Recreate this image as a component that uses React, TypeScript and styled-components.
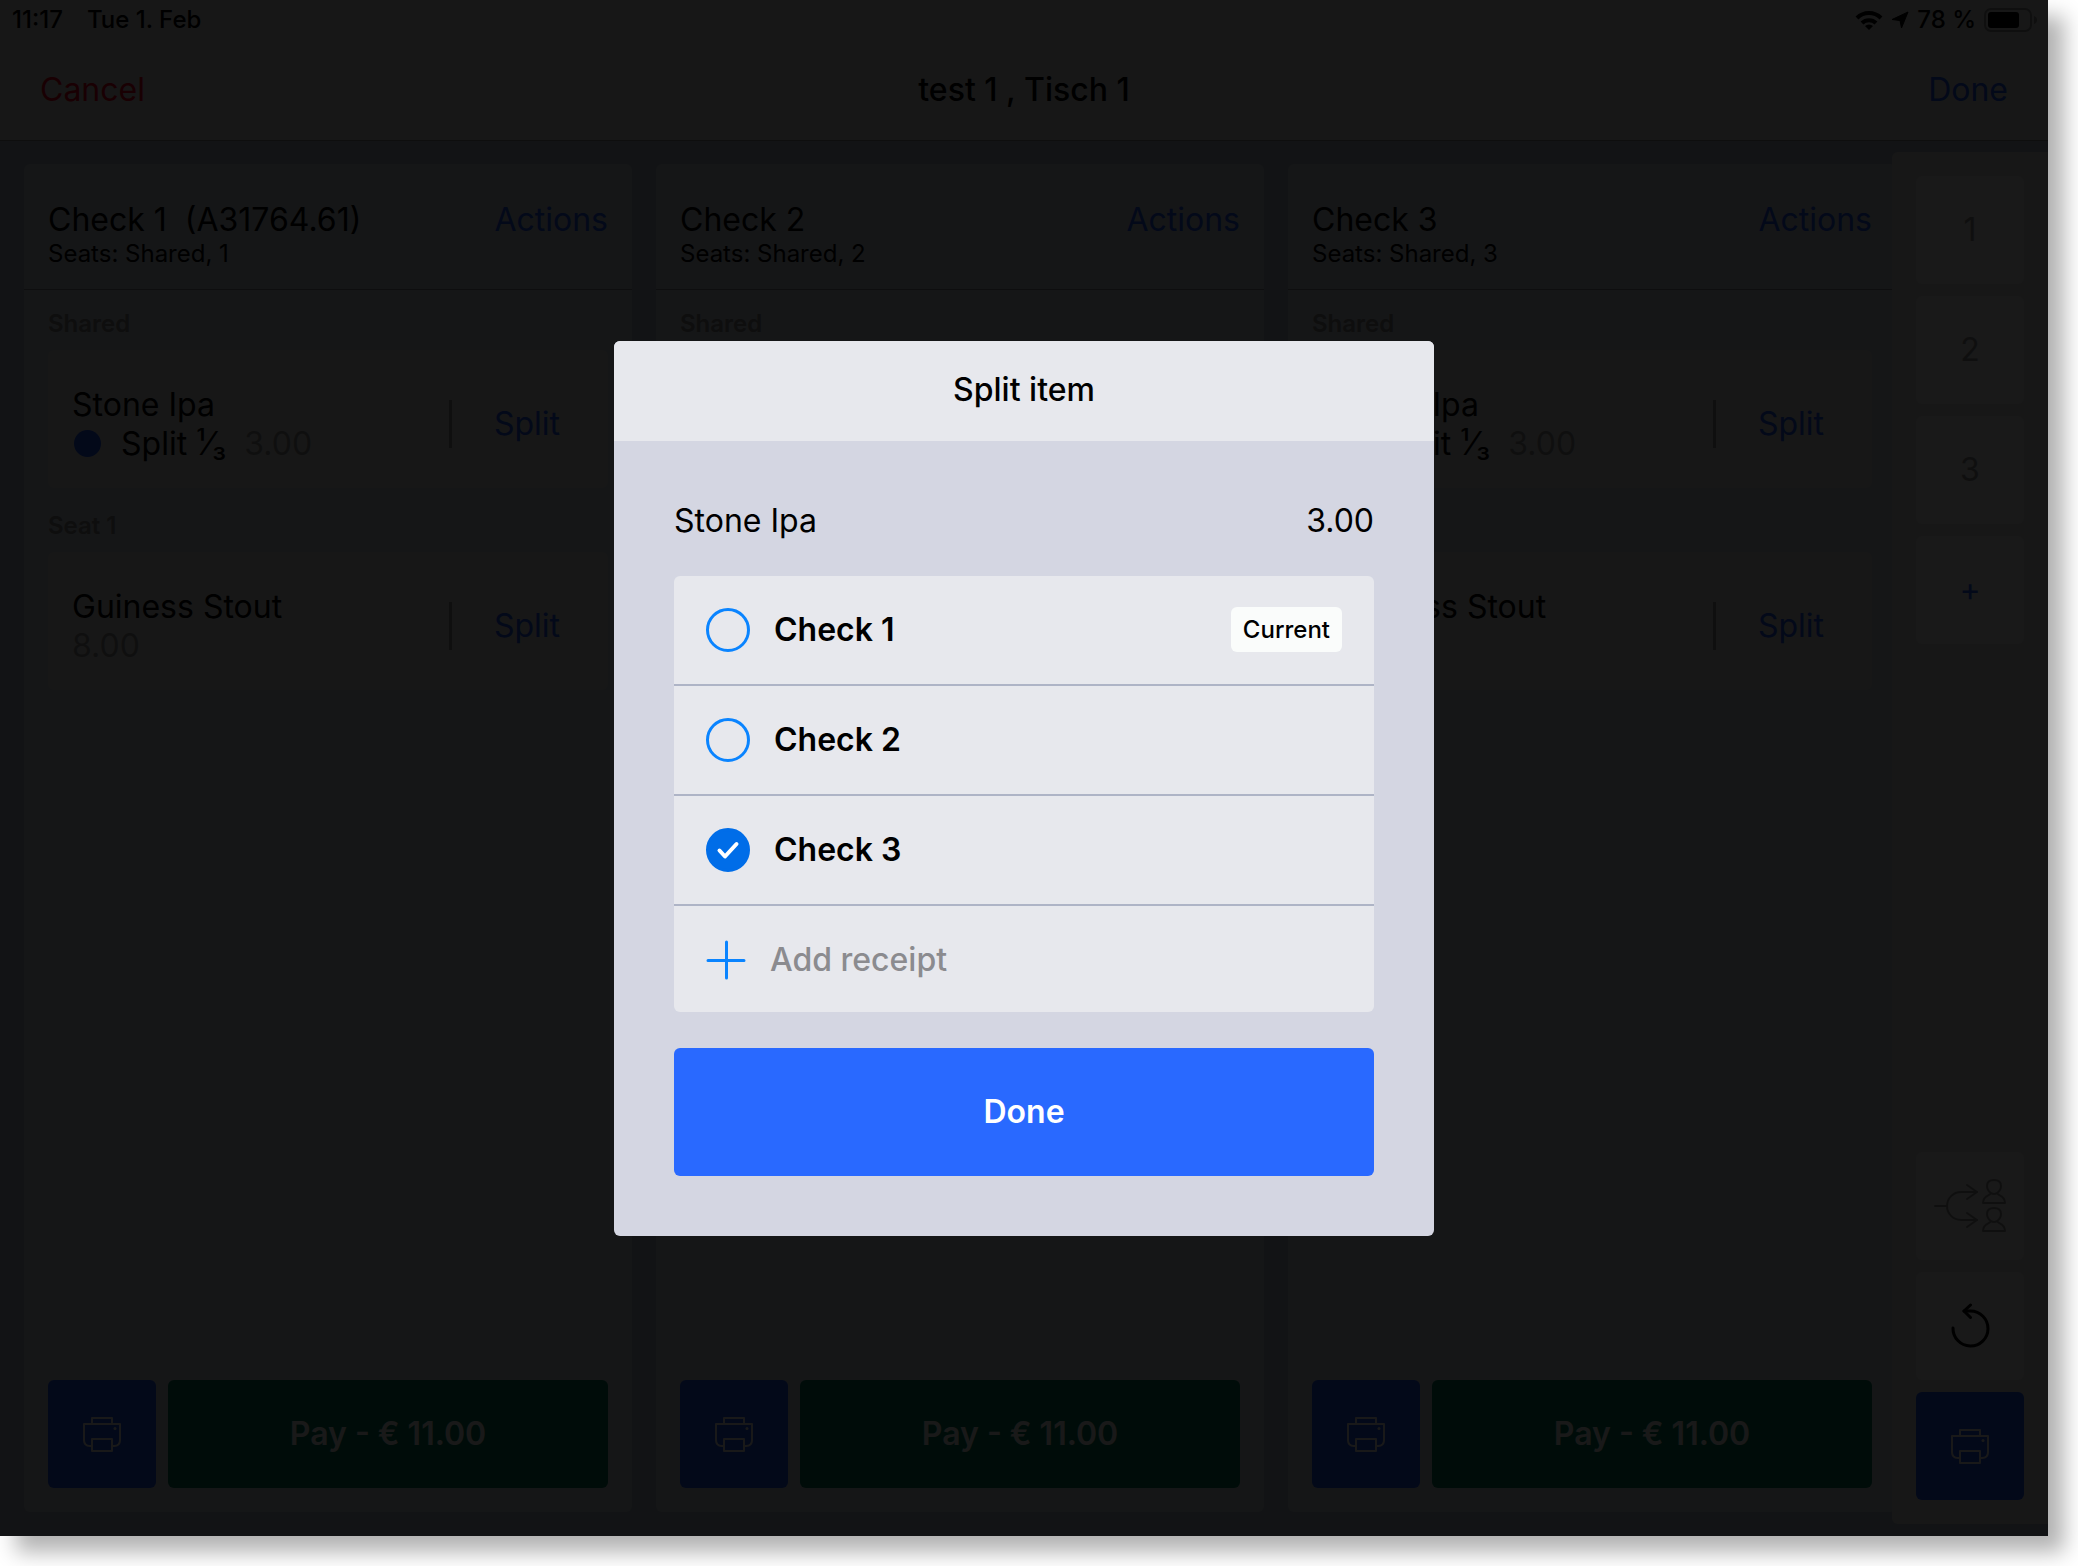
import React, { useState } from 'react';
import styled, { createGlobalStyle } from 'styled-components';

const blue = '#1e5aff';

const GlobalStyle = createGlobalStyle`
  * { box-sizing: border-box; }
  html, body, #root { height: 100%; }
  body {
    margin: 0;
    background: #fff;
    color: #000;
    font-family: Inter, "Liberation Sans", sans-serif;
    font-size: 32px;
    line-height: 40px;
    font-weight: 400;
    overflow: hidden;
  }
  button {
    font: inherit;
    color: inherit;
    border: 0;
    padding: 0;
    background: none;
    cursor: pointer;
  }
  h1, h2, h3, p, ul { margin: 0; padding: 0; font: inherit; list-style: none; }
`;

const Page = styled.div`
  height: 100%;
  padding: 0 30px 30px 0;
`;

const Screen = styled.div`
  position: relative;
  height: 100%;
  display: flex;
  flex-direction: column;
  background: #b8c4d2;
  box-shadow: 16px 16px 20px rgba(0, 0, 0, 0.3);
`;

const StatusBar = styled.div`
  display: flex;
  justify-content: space-between;
  align-items: center;
  height: 40px;
  padding: 0 10px 0 12px;
  background: #e8e8e8;
  font-size: 24px;
  line-height: 40px;
  font-weight: 500;
`;

const StatusGroup = styled.div<{ $gap: number }>`
  display: flex;
  align-items: center;
  gap: ${(p) => p.$gap}px;
`;

const NavBar = styled.header`
  display: grid;
  grid-template-columns: 1fr auto 1fr;
  align-items: center;
  height: 101px;
  padding: 0 40px;
  background: #e8e8e8;
  border-bottom: 1px solid #8c8c8c;
`;

const NavTitle = styled.h1`
  font-weight: 500;
`;

const LinkButton = styled.button<{ $tone?: string; $end?: boolean }>`
  color: ${(p) => p.$tone ?? blue};
  justify-self: ${(p) => (p.$end ? 'end' : 'start')};
`;

const Workspace = styled.main`
  flex: 1;
  min-height: 0;
  display: flex;
`;

const Columns = styled.div`
  flex: 1;
  min-width: 0;
  display: flex;
  gap: 24px;
  padding: 23px 0 24px 24px;
  margin-right: -4px;
`;

const Column = styled.section`
  flex: 1;
  min-width: 0;
  display: flex;
  flex-direction: column;
  background: #d5dce6;
  border-radius: 6px;
`;

const ColumnHead = styled.div`
  display: flex;
  justify-content: space-between;
  align-items: flex-start;
  height: 126px;
  padding: 36px 24px 0;
  border-bottom: 1px solid #8c9298;
`;

const ColumnTitle = styled.h2`
  white-space: pre;
`;

const Seats = styled.p`
  font-size: 24px;
  line-height: 28px;
`;

const ColumnBody = styled.div`
  flex: 1;
  display: flex;
  flex-direction: column;
  gap: 4px;
  padding: 0 24px;
`;

const GroupLabel = styled.h3`
  height: 60px;
  padding-top: 4px;
  font-size: 24px;
  line-height: 60px;
  font-weight: 600;
  color: #8c8c8c;
`;

const ItemCard = styled.div`
  display: flex;
  align-items: center;
  justify-content: space-between;
  height: 138px;
  padding: 10px 48px 0 24px;
  background: #e8e8e8;
  border-radius: 6px;
`;

const ItemLine = styled.div`
  display: flex;
  align-items: center;
  line-height: 39px;
`;

const Dot = styled.span`
  width: 27px;
  height: 27px;
  margin: 0 20px 0 2px;
  border-radius: 50%;
  background: ${blue};
`;

const SplitText = styled.span`
  white-space: pre;
`;

const Price = styled.span<{ $spaced?: boolean }>`
  margin-left: ${(p) => (p.$spaced ? 18 : 0)}px;
  color: #9c9c9c;
`;

const SplitArea = styled.div`
  display: flex;
  align-items: center;
  gap: 42px;
  &::before {
    content: '';
    width: 3px;
    height: 48px;
    background: #9c9c9c;
  }
`;

const ColumnFoot = styled.div`
  display: flex;
  gap: 12px;
  padding: 24px;
`;

const Tile = styled.button<{ $bg?: string; $tone?: string }>`
  flex: none;
  width: 108px;
  height: 108px;
  display: flex;
  align-items: center;
  justify-content: center;
  border-radius: 6px;
  background: ${(p) => p.$bg ?? '#f9f9f9'};
  color: ${(p) => p.$tone ?? '#9c9c9c'};
`;

const PayButton = styled.button`
  flex: 1;
  height: 108px;
  border-radius: 6px;
  background: #007d5a;
  color: #ffffff;
  font-weight: 600;
`;

const Sidebar = styled.aside`
  position: relative;
  display: flex;
  flex-direction: column;
  gap: 12px;
  margin: 11px 0 12px;
  padding: 24px;
  background: #e8e8e8;
  border-radius: 6px 0 0 6px;
`;

const Spacer = styled.div`
  flex: 1;
`;

const Overlay = styled.div`
  position: absolute;
  inset: 0;
  display: flex;
  align-items: center;
  justify-content: center;
  padding-top: 40px;
  background: rgba(0, 0, 0, 0.9);
`;

const Modal = styled.div`
  width: 820px;
  border-radius: 6px;
  overflow: hidden;
  background: #d4d6e2;
`;

const ModalHead = styled.h2`
  height: 100px;
  line-height: 98px;
  text-align: center;
  font-weight: 500;
  background: #e7e8ed;
`;

const ModalBody = styled.div`
  padding: 60px;
`;

const Summary = styled.div`
  display: flex;
  justify-content: space-between;
  margin-bottom: 35px;
`;

const CheckList = styled.ul`
  margin-bottom: 36px;
  border-radius: 6px;
  overflow: hidden;
  background: #e7e8ed;
`;

const CheckRow = styled.li`
  border-bottom: 2px solid #aeb4c6;
  &:last-child { border-bottom: 0; }
`;

const CheckLabel = styled.label`
  display: flex;
  align-items: center;
  height: 108px;
  padding: 0 32px;
  font-weight: 600;
  cursor: pointer;
`;

const CheckBox = styled.input`
  appearance: none;
  width: 44px;
  height: 44px;
  margin: 0 24px 0 0;
  border: 3px solid #0a84ff;
  border-radius: 50%;
  &:checked {
    border-color: #006de8;
    background: #006de8 url("data:image/svg+xml,%3Csvg xmlns='http://www.w3.org/2000/svg' viewBox='0 0 38 38'%3E%3Cpath d='M10.500 19.500l5.500 6L27.500 13' fill='none' stroke='white' stroke-width='4' stroke-linecap='round' stroke-linejoin='round'/%3E%3C/svg%3E") center / 38px 38px no-repeat;
  }
`;

const Badge = styled.span`
  margin-left: auto;
  padding: 1px 12px 0;
  border-radius: 6px;
  background: #fafcfb;
  font-size: 24px;
  line-height: 44px;
  font-weight: 500;
`;

const AddButton = styled.button`
  display: flex;
  align-items: center;
  gap: 24px;
  width: 100%;
  height: 106px;
  padding: 2px 32px 0;
  font-weight: 500;
  color: #8b8b8f;
`;

const PrimaryButton = styled.button`
  display: block;
  width: 100%;
  height: 128px;
  border-radius: 6px;
  background: #2969ff;
  color: #fff;
  font-weight: 600;
`;

const PrinterIcon = () => (
  <svg width="40" height="36" viewBox="0 0 40 36" fill="none" stroke="#fff" strokeWidth="2" strokeLinejoin="round" aria-hidden="true">
    <path d="M10 8V2h20v6" />
    <path d="M10 30H8q-6 0-6-6V8h36v16q0 6-6 6h-2" />
    <path d="M10 23h20v12H10z" />
    <circle cx="33" cy="12.500" r="1.500" fill="#fff" stroke="none" />
  </svg>
);

const SplitSeatsIcon = () => (
  <svg width="74" height="54" viewBox="0 0 74 54" fill="none" stroke="currentColor" strokeWidth="2" strokeLinecap="round" strokeLinejoin="round" aria-hidden="true">
    <path d="M2 27h12M44 13H28a14 14 0 0 0 0 28h16" />
    <path d="M34 6l10 7-10 7M34 34l10 7-10 7" />
    <path d="M58 14c-3-2-4-4-4-7 0-4 3-6 7-6s7 2 7 6c0 3-1 5-4 7q-3 2-6 0zM58 14c-1 3-8 2-8 10h22c0-8-7-7-8-10" />
    <path d="M58 42c-3-2-4-4-4-7 0-4 3-6 7-6s7 2 7 6c0 3-1 5-4 7q-3 2-6 0zM58 42c-1 3-8 2-8 10h22c0-8-7-7-8-10" />
  </svg>
);

const UndoIcon = () => (
  <svg width="40" height="46" viewBox="0 1 40 46" fill="none" stroke="#000" strokeWidth="3" strokeLinecap="round" strokeLinejoin="round" aria-hidden="true">
    <path d="M3 26A17.500 17.500 0 1 0 20.500 9H14" />
    <path d="M20.500 3L14 9l6.500 6.500" />
  </svg>
);

const PlusIcon = () => (
  <svg width="40" height="40" viewBox="0 0 40 40" stroke="#0a84ff" strokeWidth="3" strokeLinecap="round" aria-hidden="true">
    <path d="M20.500 2v36M2 20.500h36" />
  </svg>
);

const WifiIcon = () => (
  <svg width="28" height="20" viewBox="0 0 28 20" fill="none" stroke="#000" strokeWidth="4" aria-hidden="true">
    <path d="M2 8a17 17 0 0 1 24 0M7 13a10 10 0 0 1 14 0" />
    <path d="M14 20l-4-4a6 6 0 0 1 8 0z" fill="#000" stroke="none" />
  </svg>
);

const LocationIcon = () => (
  <svg width="18" height="18" viewBox="0 0 18 18" aria-hidden="true">
    <path d="M17 1L10.500 17 9 9.500 1 8.500z" fill="#000" stroke="#000" strokeLinejoin="round" />
  </svg>
);

const BatteryIcon = () => (
  <svg width="54" height="24" viewBox="0 0 54 24" aria-hidden="true">
    <rect x="1" y="1" width="46" height="22" rx="6" fill="none" stroke="#969696" strokeWidth="2" />
    <rect x="4" y="4" width="31" height="16" rx="3" fill="#000" />
    <path d="M50 8q3 1 3 4t-3 4z" fill="#969696" />
  </svg>
);

interface CheckColumnProps {
  seat: number;
  reference?: string;
}

function CheckColumn({ seat, reference }: CheckColumnProps) {
  return (
    <Column>
      <ColumnHead>
        <div>
          <ColumnTitle>{`Check ${seat}${reference ? `  (${reference})` : ''}`}</ColumnTitle>
          <Seats>Seats: Shared, {seat}</Seats>
        </div>
        <LinkButton>Actions</LinkButton>
      </ColumnHead>
      <ColumnBody>
        <div>
          <GroupLabel>Shared</GroupLabel>
          <ItemCard>
            <div>
              <ItemLine>Stone Ipa</ItemLine>
              <ItemLine>
                <Dot />
                <SplitText>Split ¹⁄₃</SplitText>
                <Price $spaced>3.00</Price>
              </ItemLine>
            </div>
            <SplitArea>
              <LinkButton>Split</LinkButton>
            </SplitArea>
          </ItemCard>
        </div>
        <div>
          <GroupLabel>Seat {seat}</GroupLabel>
          <ItemCard>
            <div>
              <ItemLine>Guiness Stout</ItemLine>
              <ItemLine>
                <Price>8.00</Price>
              </ItemLine>
            </div>
            <SplitArea>
              <LinkButton>Split</LinkButton>
            </SplitArea>
          </ItemCard>
        </div>
      </ColumnBody>
      <ColumnFoot>
        <Tile $bg={blue} aria-label={`Print check ${seat}`}>
          <PrinterIcon />
        </Tile>
        <PayButton>Pay - € 11.00</PayButton>
      </ColumnFoot>
    </Column>
  );
}

export default function App() {
  const [selected, setSelected] = useState<number[]>([3]);
  const toggle = (n: number) =>
    setSelected((s) => (s.includes(n) ? s.filter((v) => v !== n) : [...s, n]));

  return (
    <>
      <GlobalStyle />
      <Page>
        <Screen>
          <StatusBar>
            <StatusGroup $gap={24}>
              <span>11:17</span>
              <span>Tue 1. Feb</span>
            </StatusGroup>
            <StatusGroup $gap={8}>
              <WifiIcon />
              <LocationIcon />
              <span>78 %</span>
              <BatteryIcon />
            </StatusGroup>
          </StatusBar>
          <NavBar>
            <LinkButton $tone="#ff0020">Cancel</LinkButton>
            <NavTitle>test 1 , Tisch 1</NavTitle>
            <LinkButton $end>Done</LinkButton>
          </NavBar>
          <Workspace>
            <Columns>
              <CheckColumn seat={1} reference="A31764.61" />
              <CheckColumn seat={2} />
              <CheckColumn seat={3} />
            </Columns>
            <Sidebar>
              <Tile>1</Tile>
              <Tile>2</Tile>
              <Tile>3</Tile>
              <Tile $tone={blue}>+</Tile>
              <Spacer />
              <Tile aria-label="Split by seats">
                <SplitSeatsIcon />
              </Tile>
              <Tile aria-label="Reset">
                <UndoIcon />
              </Tile>
              <Tile $bg={blue} aria-label="Print all">
                <PrinterIcon />
              </Tile>
            </Sidebar>
          </Workspace>
          <Overlay>
            <Modal role="dialog" aria-labelledby="split-title">
              <ModalHead id="split-title">Split item</ModalHead>
              <ModalBody>
                <Summary>
                  <span>Stone Ipa</span>
                  <span>3.00</span>
                </Summary>
                <CheckList>
                  {[1, 2, 3].map((n) => (
                    <CheckRow key={n}>
                      <CheckLabel htmlFor={`check-${n}`}>
                        <CheckBox
                          id={`check-${n}`}
                          type="checkbox"
                          checked={selected.includes(n)}
                          onChange={() => toggle(n)}
                        />
                        Check {n}
                        {n === 1 && <Badge>Current</Badge>}
                      </CheckLabel>
                    </CheckRow>
                  ))}
                  <CheckRow>
                    <AddButton>
                      <PlusIcon />
                      Add receipt
                    </AddButton>
                  </CheckRow>
                </CheckList>
                <PrimaryButton>Done</PrimaryButton>
              </ModalBody>
            </Modal>
          </Overlay>
        </Screen>
      </Page>
    </>
  );
}
